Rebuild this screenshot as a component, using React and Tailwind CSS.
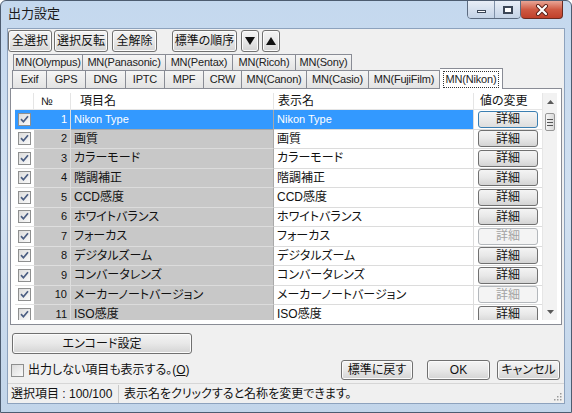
import React from 'react';

const rows = [
  { n: 1, name: 'Nikon Type', on: true, latin: true },
  { n: 2, name: '画質', on: true },
  { n: 3, name: 'カラーモード', on: true },
  { n: 4, name: '階調補正', on: true },
  { n: 5, name: 'CCD感度', on: true },
  { n: 6, name: 'ホワイトバランス', on: true },
  { n: 7, name: 'フォーカス', on: false },
  { n: 8, name: 'デジタルズーム', on: true },
  { n: 9, name: 'コンバータレンズ', on: true },
  { n: 10, name: 'メーカーノートバージョン', on: false },
  { n: 11, name: 'ISO感度', on: true },
];

const tabsTop = [
  ['MN(Olympus)', 'w-[70px]'],
  ['MN(Panasonic)', 'w-[83px]'],
  ['MN(Pentax)', 'w-[67px]'],
  ['MN(Ricoh)', 'w-[63px]'],
  ['MN(Sony)', 'w-[56px]'],
];

const tabsBottom = [
  ['Exif', 'w-[35px]'],
  ['GPS', 'w-[39px]'],
  ['DNG', 'w-[40px]'],
  ['IPTC', 'w-[39px]'],
  ['MPF', 'w-[39px]'],
  ['CRW', 'w-[38px]'],
  ['MN(Canon)', 'w-[65px]'],
  ['MN(Casio)', 'w-[62px]'],
  ['MN(FujiFilm)', 'w-[71px]'],
];

const btn =
  'flex items-center justify-center border border-[#707070] rounded-[3px] bg-linear-to-b from-[#f4f4f4] via-[#e8e8e8] to-[#d4d4d4] shadow-[inset_0_0_0_1px_#fbfbfb] text-[#111]';

function Check({ checked }) {
  return (
    <span className="flex h-[13px] w-[13px] items-center justify-center border border-[#8e8f8f] bg-linear-to-br from-[#dcdcdc] to-[#fafafa]">
      {checked && (
        <svg width="9" height="9" viewBox="0 0 9 9">
          <path d="M1 4.2 L3.4 6.8 L8 1.3" stroke="#4a5d82" strokeWidth="1.7" fill="none" />
        </svg>
      )}
    </span>
  );
}

function Tab({ label, w }) {
  return (
    <div className={`${w} flex items-center justify-center border-t border-r border-[#898c95] bg-linear-to-b from-[#f5f5f5] to-[#e3e3e3] first:border-l text-[11px] tracking-[-0.2px] text-[#222]`}>
      {label}
    </div>
  );
}

function Row({ r, sel }) {
  const gray = sel ? 'bg-[#3399ff] text-white' : 'bg-[#c8c8c8]';
  const white = sel ? 'bg-[#3399ff] text-white' : 'bg-white';
  const txt = r.latin ? 'text-[11px]' : '';
  return (
    <div className="flex h-[19.5px] shrink-0">
      <div className={`w-[19px] flex items-center justify-center border-b border-[#e2e2e2] ${white}`}>
        <Check checked />
      </div>
      <div className={`w-[37px] flex items-center justify-end pr-[3px] border-b border-r border-[#dedede] text-[11px] ${gray}`}>{r.n}</div>
      <div className={`w-[203px] flex items-center pl-[3px] border-b border-r border-[#a9a9a9] ${txt} ${gray} ${sel ? '' : 'border-b-[#dcdcdc]'}`}>{r.name}</div>
      <div className={`w-[200px] flex items-center pl-[3px] border-b border-r border-[#dcdcdc] ${txt} ${white}`}>{r.name}</div>
      <div className="w-[68px] flex items-center justify-center border-b border-[#dcdcdc] bg-white">
        <div
          className={`w-[60px] h-[17px] flex items-center justify-center rounded-[3px] border ${
            r.on
              ? sel
                ? 'border-[#3c7fb1] bg-linear-to-b from-[#f6f6f6] to-[#dedede] text-[#111]'
                : 'border-[#707070] bg-linear-to-b from-[#f4f4f4] via-[#e8e8e8] to-[#d4d4d4] text-[#111]'
              : 'border-[#b4b8bc] bg-[#f4f4f4] text-[#a3a3a3]'
          }`}
        >
          詳細
        </div>
      </div>
    </div>
  );
}

export default function App() {
  return (
    <div className="w-[572px] h-[413px] flex flex-col overflow-hidden rounded-t-[6px] border border-[#4d5c70] bg-linear-to-b from-[#c4d8ee] via-[#d2e1f1] to-[#c2d5ea] font-['Liberation_Sans','Noto_Sans_CJK_JP',sans-serif] [font-feature-settings:'palt'] text-[12px] leading-none text-[#111]">
      {/* title bar */}
      <div className="h-[27px] flex items-start justify-between pl-[7px] pr-[8px] shrink-0">
        <div className="mt-[6px] text-[13px] text-[#1a1a1a]">出力設定</div>
        <div className="flex">
          <div className="flex h-[19px] -mt-px rounded-b-[4px] border border-[#5c6b80] overflow-hidden">
            <div className="w-[26px] flex items-end justify-center pb-[5px] bg-linear-to-b from-[#e8eef7] to-[#c4d3e6]">
              <span className="block w-[9px] h-[3px] bg-white border border-[#3b4656]" />
            </div>
            <div className="w-[26px] flex items-center justify-center border-l border-[#7f90a8] bg-linear-to-b from-[#e8eef7] to-[#c4d3e6]">
              <span className="block w-[10px] h-[8px] border border-[#3b4656] bg-white shadow-[inset_0_0_0_1px_#3b4656]" />
            </div>
          </div>
          <div className="w-[42px] h-[19px] -mt-px flex items-center justify-center rounded-b-[4px] border border-l-0 border-[#6b2a20] bg-linear-to-b from-[#e8a596] via-[#cf5a43] to-[#c0402a]">
            <svg width="14" height="12" viewBox="0 0 14 12">
              <path d="M3 2 L11 10 M11 2 L3 10" stroke="#5a2018" strokeWidth="4" strokeLinecap="round" />
              <path d="M3 2 L11 10 M11 2 L3 10" stroke="#ffffff" strokeWidth="2.2" strokeLinecap="round" />
            </svg>
          </div>
        </div>
      </div>

      {/* client area */}
      <div className="mx-[6px] flex-1 flex flex-col bg-[#f0f0f0] border border-[#8da2bd]">
        {/* toolbar */}
        <div className="flex h-[22px] mt-px shrink-0">
          <div className={`${btn} ml-[0px] w-[44px]`}>全選択</div>
          <div className={`${btn} ml-[2px] w-[54px]`}>選択反転</div>
          <div className={`${btn} ml-[4px] w-[45px]`}>全解除</div>
          <div className={`${btn} ml-[15px] w-[65px]`}>標準の順序</div>
          <div className={`${btn} ml-[4px] w-[18px]`}>
            <svg width="10" height="8" viewBox="0 0 10 8"><path d="M0 0 H10 L5 8 Z" fill="#111" /></svg>
          </div>
          <div className={`${btn} ml-[3px] w-[18px]`}>
            <svg width="10" height="8" viewBox="0 0 10 8"><path d="M0 8 H10 L5 0 Z" fill="#111" /></svg>
          </div>
        </div>

        {/* tabs */}
        <div className="mt-[2px] ml-[5px] flex h-[16px] shrink-0">
          {tabsTop.map(([l, w]) => (
            <Tab key={l} label={l} w={w} />
          ))}
        </div>
        <div className="ml-[4px] flex h-[18px] shrink-0 relative z-10">
          {tabsBottom.map(([l, w]) => (
            <Tab key={l} label={l} w={w} />
          ))}
          <div className="w-[63px] h-[21px] -mt-[2px] flex items-center justify-center border-t border-r border-[#898c95] bg-white text-[11px] tracking-[-0.2px] text-[#222]">
            <span className="px-[2px] py-[2px] border border-dotted border-[#333]">MN(Nikon)</span>
          </div>
        </div>

        {/* panel */}
        <div className="mx-[2px] h-[237px] shrink-0 border border-[#898c95] bg-white p-[4px]">
          <div className="flex h-full overflow-hidden">
            <div className="flex flex-col w-[527px]">
              <div className="flex h-[17px] shrink-0 bg-white border-b border-[#e5e5e5]">
                <div className="w-[19px] border-r border-[#e5e5e5]" />
                <div className="w-[37px] flex items-center pl-[7px] border-r border-[#e5e5e5] text-[11px]">№</div>
                <div className="w-[203px] flex items-center pl-[9px] border-r border-[#e5e5e5]">項目名</div>
                <div className="w-[200px] flex items-center pl-[4px] border-r border-[#e5e5e5]">表示名</div>
                <div className="w-[68px] flex items-center pl-[6px]">値の変更</div>
              </div>
              {rows.map((r, i) => (
                <Row key={r.n} r={r} sel={i === 0} />
              ))}
            </div>
            <div className="w-[16px] flex flex-col bg-[#f2f2f2] border-l border-[#e6e6e6]">
              <div className="h-[17px] flex items-center justify-center shrink-0">
                <svg width="7" height="4" viewBox="0 0 7 4"><path d="M0 4 H7 L3.5 0 Z" fill="#5a5a5a" /></svg>
              </div>
              <div className="mt-[3px] mx-[2px] h-[18px] shrink-0 rounded-[2px] border border-[#979797] bg-linear-to-r from-[#f5f5f5] to-[#dadada] flex flex-col items-center justify-center gap-[2px]">
                <span className="block w-[6px] h-px bg-[#555]" />
                <span className="block w-[6px] h-px bg-[#555]" />
                <span className="block w-[6px] h-px bg-[#555]" />
              </div>
              <div className="flex-1" />
              <div className="h-[17px] flex items-center justify-center shrink-0">
                <svg width="7" height="4" viewBox="0 0 7 4"><path d="M0 0 H7 L3.5 4 Z" fill="#5a5a5a" /></svg>
              </div>
            </div>
          </div>
        </div>

        {/* bottom controls */}
        <div className={`${btn} mt-[8px] ml-[4px] w-[180px] h-[21px] shrink-0`}>エンコード設定</div>
        <div className="mt-[6px] flex h-[20px] items-center shrink-0 pr-[4px]">
          <span className="ml-[3px] block w-[13px] h-[13px] border border-[#8e8f8f] bg-linear-to-br from-[#dcdcdc] to-[#fafafa]" />
          <span className="ml-[4px]">
            出力しない項目も表示する。(<span className="underline">O</span>)
          </span>
          <div className="flex-1" />
          <div className={`${btn} w-[72px] h-[20px]`}>標準に戻す</div>
          <div className={`${btn} ml-[14px] w-[63px] h-[20px]`}>OK</div>
          <div className={`${btn} ml-[7px] w-[63px] h-[20px]`}>キャンセル</div>
        </div>

        {/* status bar */}
        <div className="mt-[3px] flex-1 flex items-center border-t border-[#d6d6d6] relative">
          <div className="pl-[3px] w-[110px]">選択項目 : 100/100</div>
          <div className="w-px h-[18px] bg-[#c9c9c9]" />
          <div className="pl-[5px]">表示名をクリックすると名称を変更できます。</div>
          <svg className="absolute right-[2px] bottom-[2px]" width="9" height="9" viewBox="0 0 9 9">
            {[[7, 1], [7, 4], [4, 4], [7, 7], [4, 7], [1, 7]].map(([x, y]) => (
              <rect key={`${x}-${y}`} x={x} y={y} width="1.5" height="1.5" fill="#9a9a9a" />
            ))}
          </svg>
        </div>
      </div>
      <div className="h-[8px] shrink-0" />
    </div>
  );
}
